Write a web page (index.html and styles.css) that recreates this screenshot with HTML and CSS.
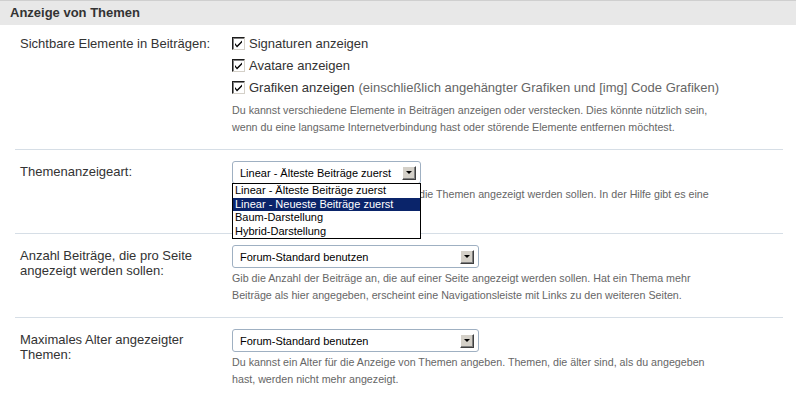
FILE: index.html
```html
<!DOCTYPE html>
<html lang="de">
<head>
<meta charset="utf-8">
<title>Anzeige von Themen</title>
<link rel="stylesheet" href="styles.css">
</head>
<body>
<div class="panel">
  <h2 class="panel-title">Anzeige von Themen</h2>

  <div class="row row-first">
    <div class="label">Sichtbare Elemente in Beiträgen:</div>
    <div class="field">
      <div class="check-line"><span class="cb"><svg viewBox="0 0 13 13" width="13" height="13"><path d="M3 6 L5 8.5 L10 3.5 L10 5.5 L5 10.5 L3 8 Z" fill="#000"/></svg></span>Signaturen anzeigen</div>
      <div class="check-line"><span class="cb"><svg viewBox="0 0 13 13" width="13" height="13"><path d="M3 6 L5 8.5 L10 3.5 L10 5.5 L5 10.5 L3 8 Z" fill="#000"/></svg></span>Avatare anzeigen</div>
      <div class="check-line"><span class="cb"><svg viewBox="0 0 13 13" width="13" height="13"><path d="M3 6 L5 8.5 L10 3.5 L10 5.5 L5 10.5 L3 8 Z" fill="#000"/></svg></span>Grafiken anzeigen <span class="muted">(einschließlich angehängter Grafiken und [img] Code Grafiken)</span></div>
      <p class="help help-gap">Du kannst verschiedene Elemente in Beiträgen anzeigen oder verstecken. Dies könnte nützlich sein,<br>wenn du eine langsame Internetverbindung hast oder störende Elemente entfernen möchtest.</p>
    </div>
  </div>

  <div class="row">
    <div class="label">Themenanzeigeart:</div>
    <div class="field">
      <div class="select-wrap">
        <div class="select select-short"><span class="select-text">Linear - Älteste Beiträge zuerst</span><span class="drop-btn"><span class="tri"></span></span></div>
        <ul class="options">
          <li>Linear - Älteste Beiträge zuerst</li>
          <li class="selected">Linear - Neueste Beiträge zuerst</li>
          <li>Baum-Darstellung</li>
          <li>Hybrid-Darstellung</li>
        </ul>
      </div>
      <p class="help">Du kannst festlegen, auf welche Weise die Themen angezeigt werden sollen. In der Hilfe gibt es eine<br>genaue Erklärung.</p>
    </div>
  </div>

  <div class="row">
    <div class="label">Anzahl Beiträge, die pro Seite<br>angezeigt werden sollen:</div>
    <div class="field">
      <div class="select select-long"><span class="select-text">Forum-Standard benutzen</span><span class="drop-btn"><span class="tri"></span></span></div>
      <p class="help">Gib die Anzahl der Beiträge an, die auf einer Seite angezeigt werden sollen. Hat ein Thema mehr<br>Beiträge als hier angegeben, erscheint eine Navigationsleiste mit Links zu den weiteren Seiten.</p>
    </div>
  </div>

  <div class="row row-last">
    <div class="label">Maximales Alter angezeigter<br>Themen:</div>
    <div class="field">
      <div class="select select-long"><span class="select-text">Forum-Standard benutzen</span><span class="drop-btn"><span class="tri"></span></span></div>
      <p class="help">Du kannst ein Alter für die Anzeige von Themen angeben. Themen, die älter sind, als du angegeben<br>hast, werden nicht mehr angezeigt.</p>
    </div>
  </div>
</div>
</body>
</html>
```

FILE: styles.css
```css
html, body {
  margin: 0;
  padding: 0;
  background: #fff;
}
body {
  font-family: "Liberation Sans", Arial, sans-serif;
  font-size: 13px;
  color: #333;
  width: 796px;
  height: 400px;
  overflow: hidden;
}
.panel-title {
  margin: 0;
  height: 24px;
  line-height: 24px;
  border-top: 1px solid #cfcfcf;
  background: #e8e8e8;
  padding-left: 10px;
  font-size: 13px;
  font-weight: bold;
  color: #333;
}
.row {
  display: flex;
  margin: 0 13px 0 15px;
  padding: 11px 0 13px 5px;
  border-bottom: 1px solid #d6dee6;
}
.row-first {
  padding-top: 7px;
}
.row-last {
  border-bottom: none;
}
.label {
  width: 212px;
  flex: none;
  line-height: 15px;
  padding-top: 3px;
  color: #333;
}
.row-first .label {
  padding-top: 4px;
}
.field {
  flex: 1;
}
.check-line {
  display: flex;
  align-items: center;
  height: 22px;
  color: #333;
}
.cb {
  width: 13px;
  height: 13px;
  box-sizing: border-box;
  border: 1px solid #1c1c1c;
  border-right-color: #d4d0c8;
  border-bottom-color: #d4d0c8;
  background: #fff;
  margin: 0 4px 0 0;
  display: flex;
  position: relative;
  box-shadow: inset 1px 1px 0 #808080;
}
.cb svg {
  position: absolute;
  left: -1px;
  top: -1px;
}
.muted {
  color: #666;
  margin-left: 4px;
}
.help {
  margin: 2px 0 0;
  font-size: 10.7px;
  line-height: 17px;
  color: #666;
}
.help-gap {
  margin-top: 4px;
}
.select-wrap {
  position: relative;
}
.select {
  box-sizing: border-box;
  height: 23px;
  border: 1px solid #9fb0c2;
  border-radius: 3px;
  background: #fff;
  display: flex;
  align-items: center;
  justify-content: space-between;
  padding: 0 4px 0 7px;
  font-size: 11px;
  color: #000;
}
.select-short {
  width: 189px;
}
.select-long {
  width: 247px;
}
.drop-btn {
  width: 14px;
  height: 14px;
  box-sizing: border-box;
  background: #d4d0c8;
  border: 1px solid;
  border-color: #fff #404040 #404040 #fff;
  box-shadow: inset -1px -1px 0 #808080;
  display: flex;
  align-items: center;
  justify-content: center;
}
.tri {
  width: 0;
  height: 0;
  border-left: 3px solid transparent;
  border-right: 3px solid transparent;
  border-top: 3px solid #000;
}
.options {
  position: absolute;
  left: 0;
  top: 22px;
  width: 189px;
  box-sizing: border-box;
  margin: 0;
  padding: 0;
  list-style: none;
  background: #fff;
  border: 1px solid #000;
  font-size: 11px;
  color: #000;
  z-index: 2;
}
.options li {
  height: 13.5px;
  line-height: 13.5px;
  padding-left: 2px;
  white-space: nowrap;
}
.options li.selected {
  background: #0a246a;
  color: #fff;
}
```
